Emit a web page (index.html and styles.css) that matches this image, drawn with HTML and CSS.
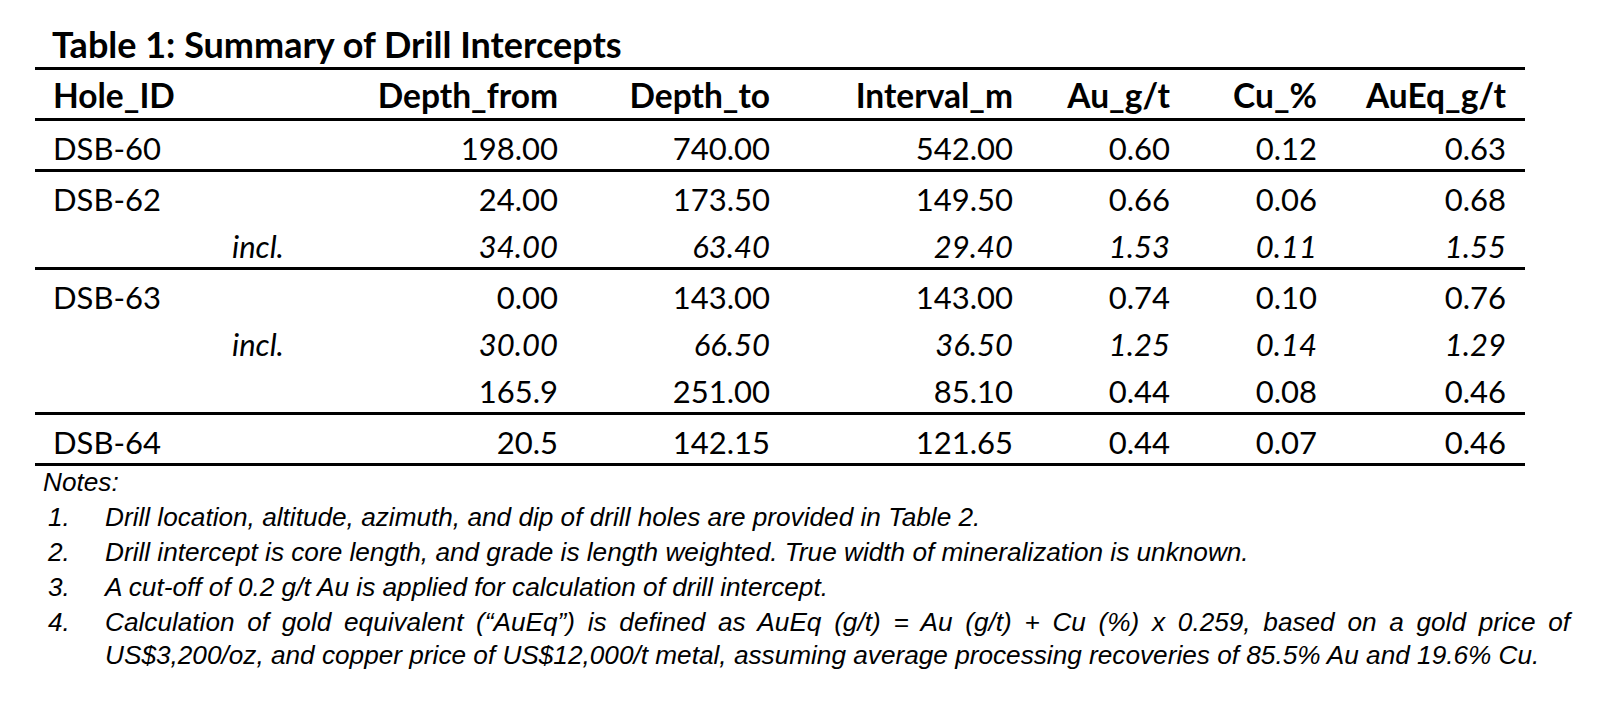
FILE: index.html
```html
<!DOCTYPE html>
<html lang="en">
<head>
<meta charset="utf-8">
<title>Table 1: Summary of Drill Intercepts</title>
<link rel="stylesheet" href="styles.css">
</head>
<body>
<div class="page">
  <h1 class="title">Table 1: Summary of Drill Intercepts</h1>
  <table class="drill">
    <colgroup>
      <col class="c1"><col class="c2"><col class="c3"><col class="c4"><col class="c5"><col class="c6"><col class="c7"><col class="c8">
    </colgroup>
    <thead>
      <tr>
        <th class="id">Hole_ID</th><th></th>
        <th>Depth_from</th><th>Depth_to</th><th>Interval_m</th><th>Au_g/t</th><th>Cu_%</th><th class="last">AuEq_g/t</th>
      </tr>
    </thead>
    <tbody>
      <tr class="end">
        <td class="id">DSB-60</td><td></td>
        <td>198.00</td><td>740.00</td><td>542.00</td><td>0.60</td><td>0.12</td><td class="last">0.63</td>
      </tr>
    </tbody>
    <tbody>
      <tr>
        <td class="id">DSB-62</td><td></td>
        <td>24.00</td><td>173.50</td><td>149.50</td><td>0.66</td><td>0.06</td><td class="last">0.68</td>
      </tr>
      <tr class="sub it end">
        <td class="id"></td><td class="incl">incl.</td>
        <td>34.00</td><td>63.40</td><td>29.40</td><td>1.53</td><td>0.11</td><td class="last">1.55</td>
      </tr>
    </tbody>
    <tbody>
      <tr>
        <td class="id">DSB-63</td><td></td>
        <td>0.00</td><td>143.00</td><td>143.00</td><td>0.74</td><td>0.10</td><td class="last">0.76</td>
      </tr>
      <tr class="sub it">
        <td class="id"></td><td class="incl">incl.</td>
        <td>30.00</td><td>66.50</td><td>36.50</td><td>1.25</td><td>0.14</td><td class="last">1.29</td>
      </tr>
      <tr class="sub end">
        <td class="id"></td><td></td>
        <td>165.9</td><td>251.00</td><td>85.10</td><td>0.44</td><td>0.08</td><td class="last">0.46</td>
      </tr>
    </tbody>
    <tbody>
      <tr class="end">
        <td class="id">DSB-64</td><td></td>
        <td>20.5</td><td>142.15</td><td>121.65</td><td>0.44</td><td>0.07</td><td class="last">0.46</td>
      </tr>
    </tbody>
  </table>
  <div class="notes">
    <p class="notes-head">Notes:</p>
    <ol class="note-list">
      <li><span class="num">1.</span><span class="txt">Drill location, altitude, azimuth, and dip of drill holes are provided in Table 2.</span></li>
      <li><span class="num">2.</span><span class="txt">Drill intercept is core length, and grade is length weighted. True width of mineralization is unknown.</span></li>
      <li><span class="num">3.</span><span class="txt">A cut-off of 0.2 g/t Au is applied for calculation of drill intercept.</span></li>
      <li><span class="num">4.</span><span class="txt">Calculation of gold equivalent (“AuEq”) is defined as AuEq (g/t) = Au (g/t) + Cu (%) x 0.259, based on a gold price of US$3,200/oz, and copper price of US$12,000/t metal, assuming average processing recoveries of 85.5% Au and 19.6% Cu.</span></li>
    </ol>
  </div>
</div>
</body>
</html>
```
FILE: styles.css
```css
html, body {
  margin: 0;
  padding: 0;
  background: #ffffff;
}
.page {
  width: 1600px;
  color: #000000;
}
.title {
  margin: 0;
  padding: 26px 0 0 52px;
  font-family: Lato, "Liberation Sans", sans-serif;
  font-weight: 700;
  font-size: 36px;
  line-height: 36px;
  height: 36px;
}
.drill {
  margin: 5px 0 0 35px;
  width: 1490px;
  table-layout: fixed;
  border-collapse: separate;
  border-spacing: 0;
  font-family: Lato, "Liberation Sans", sans-serif;
  font-size: 31px;
}
.c1 { width: 197px; }
.c2 { width: 100px; }
.c3 { width: 226px; }
.c4 { width: 212px; }
.c5 { width: 243px; }
.c6 { width: 157px; }
.c7 { width: 147px; }
.c8 { width: 208px; }
.drill th,
.drill td {
  padding: 6px 0 0 0;
  line-height: 42px;
  text-align: right;
  vertical-align: top;
  white-space: nowrap;
  overflow: visible;
}
.drill th {
  font-weight: 700;
  font-size: 33.5px;
  padding: 4px 0 2px 0;
  border-top: 3px solid #000;
  border-bottom: 3px solid #000;
}
.drill .id {
  text-align: left;
  padding-left: 18px;
}
.drill .incl {
  text-align: left;
  padding-left: 0;
}
.drill .last {
  padding-right: 19px;
}
.drill tr.sub td {
  padding-top: 5px;
}
.drill tr.it td {
  font-style: italic;
}
.drill tr.end td {
  border-bottom: 3px solid #000;
}
.notes {
  font-family: "Liberation Sans", Arial, sans-serif;
  font-style: italic;
  font-size: 26.2px;
}
.notes-head {
  margin: 0;
  padding-left: 43px;
  line-height: 33px;
}
.note-list {
  list-style: none;
  margin: 1px 0 0 0;
  padding: 0 0 0 48px;
  width: 1522px;
}
.note-list li {
  display: flex;
  margin-top: 2px;
  line-height: 33px;
}
.num {
  flex: 0 0 57px;
}
.txt {
  flex: 1 1 auto;
  text-align: justify;
}
```
